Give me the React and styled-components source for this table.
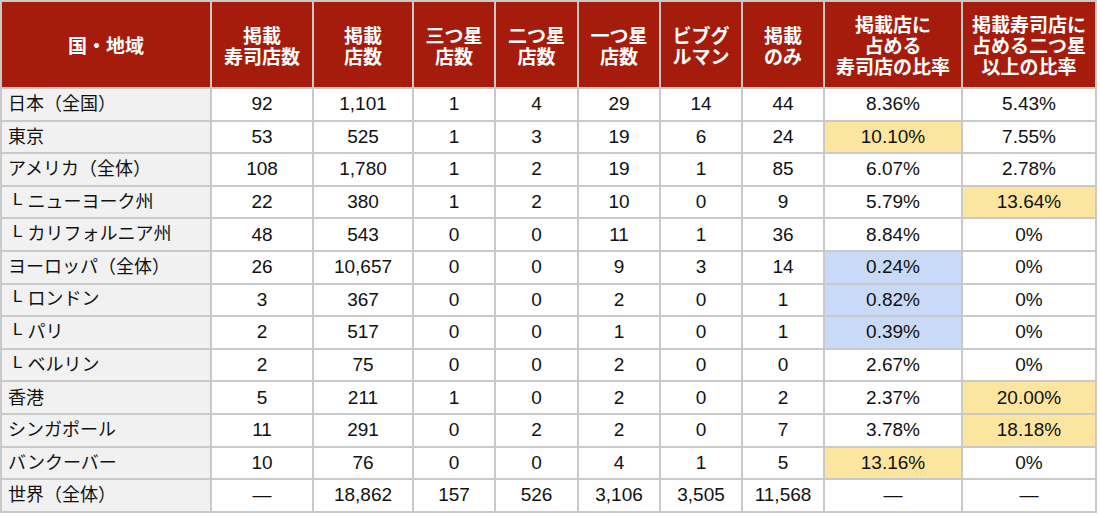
import styled, { createGlobalStyle } from 'styled-components';

const GlobalStyle = createGlobalStyle`
  body {
    margin: 0;
    background: #ffffff;
    font-family: "Liberation Sans", "Noto Sans CJK JP", sans-serif;
  }
`;

const COLS = [210, 102, 100, 82, 83, 82, 82, 82, 138, 134];

const HEADERS = [
  ['国・地域'],
  ['掲載', '寿司店数'],
  ['掲載', '店数'],
  ['三つ星', '店数'],
  ['二つ星', '店数'],
  ['一つ星', '店数'],
  ['ビブグ', 'ルマン'],
  ['掲載', 'のみ'],
  ['掲載店に', '占める', '寿司店の比率'],
  ['掲載寿司店に', '占める二つ星', '以上の比率'],
];

// hl: column index -> 'y' (yellow) | 'b' (blue)
const ROWS = [
  { name: '日本（全国）', vals: ['92', '1,101', '1', '4', '29', '14', '44', '8.36%', '5.43%'] },
  { name: '東京', vals: ['53', '525', '1', '3', '19', '6', '24', '10.10%', '7.55%'], hl: { 7: 'y' } },
  { name: 'アメリカ（全体）', vals: ['108', '1,780', '1', '2', '19', '1', '85', '6.07%', '2.78%'] },
  { name: 'ニューヨーク州', sub: true, vals: ['22', '380', '1', '2', '10', '0', '9', '5.79%', '13.64%'], hl: { 8: 'y' } },
  { name: 'カリフォルニア州', sub: true, vals: ['48', '543', '0', '0', '11', '1', '36', '8.84%', '0%'] },
  { name: 'ヨーロッパ（全体）', vals: ['26', '10,657', '0', '0', '9', '3', '14', '0.24%', '0%'], hl: { 7: 'b' } },
  { name: 'ロンドン', sub: true, vals: ['3', '367', '0', '0', '2', '0', '1', '0.82%', '0%'], hl: { 7: 'b' } },
  { name: 'パリ', sub: true, vals: ['2', '517', '0', '0', '1', '0', '1', '0.39%', '0%'], hl: { 7: 'b' } },
  { name: 'ベルリン', sub: true, vals: ['2', '75', '0', '0', '2', '0', '0', '2.67%', '0%'] },
  { name: '香港', vals: ['5', '211', '1', '0', '2', '0', '2', '2.37%', '20.00%'], hl: { 8: 'y' } },
  { name: 'シンガポール', vals: ['11', '291', '0', '2', '2', '0', '7', '3.78%', '18.18%'], hl: { 8: 'y' } },
  { name: 'バンクーバー', vals: ['10', '76', '0', '0', '4', '1', '5', '13.16%', '0%'], hl: { 7: 'y' } },
  { name: '世界（全体）', vals: ['—', '18,862', '157', '526', '3,106', '3,505', '11,568', '—', '—'] },
];

const HL = { y: '#fce59e', b: '#c9daf8' };

const Table = styled.table`
  border-collapse: collapse;
  table-layout: fixed;
  width: 1097px;
  margin: 0;
  color: #111111;
`;

const HeadRow = styled.tr`
  height: 87px;
`;

const HeadCell = styled.th`
  background: #a61c0c;
  color: #ffffff;
  border: 2px solid #c9c9c9;
  font-family: "Noto Sans CJK JP", "Liberation Sans", sans-serif;
  font-weight: 700;
  font-size: 19px;
  line-height: 21px;
  text-align: center;
  vertical-align: middle;
  padding: 0;
  white-space: nowrap;
  overflow: hidden;
`;

const HeadLine = styled.div`
  height: 21px;
`;

const BodyRow = styled.tr`
  height: 32.6px;
`;

const Cell = styled.td`
  border: 2px solid #c9c9c9;
  font-size: 19px;
  line-height: 22px;
  text-align: ${(p) => (p.$first ? 'left' : 'center')};
  padding: ${(p) => (p.$first ? '0 0 0 6px' : '0 2px')};
  background: ${(p) => (p.$hl ? HL[p.$hl] : p.$first ? '#f1f1f1' : '#ffffff')};
  white-space: nowrap;
  vertical-align: middle;
`;

const Name = styled.span`
  font-size: 18px;
`;

const Branch = styled.span`
  display: inline-block;
  font-family: "Liberation Sans", sans-serif;
  font-size: 17px;
  margin: 0 5px 0 5px;
  position: relative;
  top: -3px;
`;

const App = () => (
  <>
    <GlobalStyle />
    <Table>
      <colgroup>
        {COLS.map((w, i) => (
          <col key={i} style={{ width: w }} />
        ))}
      </colgroup>
      <thead>
        <HeadRow>
          {HEADERS.map((lines, i) => (
            <HeadCell key={i}>
              {lines.map((l, j) => (
                <HeadLine key={j}>{l}</HeadLine>
              ))}
            </HeadCell>
          ))}
        </HeadRow>
      </thead>
      <tbody>
        {ROWS.map((r) => (
          <BodyRow key={r.name}>
            <Cell $first>
              {r.sub && <Branch>L</Branch>}
              <Name>{r.name}</Name>
            </Cell>
            {r.vals.map((v, i) => (
              <Cell key={i} $hl={r.hl?.[i]}>
                {v}
              </Cell>
            ))}
          </BodyRow>
        ))}
      </tbody>
    </Table>
  </>
);

export default App;
